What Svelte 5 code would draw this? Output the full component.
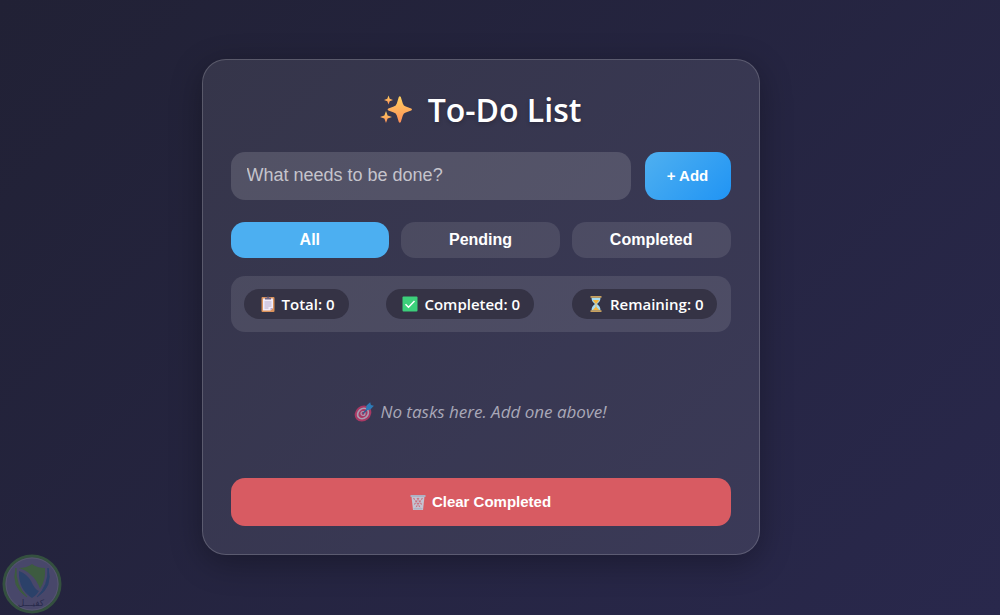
<script>
  let tasks = $state([]);
  let draft = $state('');
  let filter = $state('all');

  const filters = [
    { id: 'all', label: 'All' },
    { id: 'pending', label: 'Pending' },
    { id: 'completed', label: 'Completed' }
  ];

  let completed = $derived(tasks.filter((t) => t.done).length);
  let visible = $derived(
    tasks.filter((t) => {
      if (filter === 'pending') return !t.done;
      if (filter === 'completed') return t.done;
      return true;
    })
  );

  function addTask(event) {
    event.preventDefault();
    const text = draft.trim();
    if (!text) return;
    tasks.push({ id: Date.now(), text, done: false });
    draft = '';
  }

  function clearCompleted() {
    tasks = tasks.filter((t) => !t.done);
  }
</script>

<div class="page">
  <main class="card">
    <h1>
      <svg class="sparkles" viewBox="0 0 32 32" aria-hidden="true">
        <defs>
          <linearGradient id="spark" x1="0" y1="0" x2="0" y2="1">
            <stop offset="0" stop-color="#ffd160" />
            <stop offset="1" stop-color="#ff8f58" />
          </linearGradient>
        </defs>
        <g fill="url(#spark)">
          <path d="M18.800 3q1-1.500 2 0l2 6.500q.7 2.300 3 3l5.400 2q1.500 1 0 2l-5.400 2q-2.300.7-3 3l-2 6.500q-1 1.500-2 0l-2-6.500q-.7-2.300-3-3l-5.400-2q-1.500-1 0-2l5.400-2q2.300-.7 3-3z" />
          <path d="M8.500 1.500l1.200 3.300 3.300 1.200-3.300 1.200-1.200 3.300-1.200-3.300L4 6l3.300-1.200z" />
          <path d="M6 17l1.600 4.400L12 23l-4.400 1.600L6 29l-1.600-4.400L0 23l4.400-1.600z" />
        </g>
      </svg>
      To-Do List
    </h1>

    <form class="add-row" onsubmit={addTask}>
      <input
        type="text"
        placeholder="What needs to be done?"
        aria-label="New task"
        bind:value={draft}
      />
      <button class="add" type="submit">+ Add</button>
    </form>

    <div class="filters">
      {#each filters as f (f.id)}
        <button class:active={filter === f.id} onclick={() => (filter = f.id)}>
          {f.label}
        </button>
      {/each}
    </div>

    <div class="stats">
      <span class="stat">
        <svg viewBox="0 0 16 16" aria-hidden="true">
          <rect x="1.500" y="1" width="13" height="15" rx="1" fill="#dc935c" />
          <path d="M3 2.500h10v9.500l-2.500 2.500H3z" fill="#f2ecfa" />
          <path d="M13 12h-2.500v2.500z" fill="#b5a8cf" />
          <path d="M5 3.500V1.800h1.700Q8-.8 9.300 1.800H11v1.700z" fill="#706583" />
          <path d="M4.500 6h7M4.500 8h7M4.500 10h7M4.500 12h4" stroke="#aaa0c3" stroke-width=".8" />
        </svg>
        Total: {tasks.length}
      </span>
      <span class="stat">
        <svg viewBox="0 0 16 16" aria-hidden="true">
          <rect x=".5" y=".5" width="15" height="15" rx="1" fill="#3ccf7b" />
          <path d="M3.500 8.200l3 3 6-6.200" fill="none" stroke="#fff" stroke-width="1.500" />
        </svg>
        Completed: {completed}
      </span>
      <span class="stat">
        <svg viewBox="0 0 16 16" aria-hidden="true">
          <path d="M3.500 1.500h9c0 3.500-1.500 4.700-3.500 6.500 2 1.800 3.500 3 3.500 6.500h-9c0-3.500 1.500-4.700 3.500-6.500-2-1.800-3.500-3-3.500-6.500z" fill="#a6dcf2" />
          <path d="M5 4h6c-.5 1.500-1.500 2.500-2.600 3.600V11l2.800 3H4.800l2.800-3V7.600C6.500 6.500 5.500 5.500 5 4z" fill="#f4b63f" />
          <path d="M2.500 0h11v1.800h-11zM2.500 14.200h11V16h-11z" fill="#c9a15e" />
        </svg>
        Remaining: {tasks.length - completed}
      </span>
    </div>

    {#if visible.length === 0}
      <p class="empty">
        <svg viewBox="0 0 20 20" aria-hidden="true">
          <ellipse cx="9" cy="11.500" rx="8.800" ry="7.600" fill="#d9396c" transform="rotate(-40 9 11.500)" />
          <ellipse cx="9" cy="11.500" rx="5.800" ry="4.800" fill="none" stroke="#d8c9dd" stroke-width="1.700" transform="rotate(-40 9 11.500)" />
          <circle cx="9" cy="11.500" r="2" fill="none" stroke="#d8c9dd" stroke-width="1.200" />
          <path d="M9 11.500l5-5" stroke="#266eac" stroke-width="1.500" />
          <path d="M11.800 8.200l.7-4.700L16.200.2l.7 2.900 3 .7-3.500 3.700z" fill="#2998e2" />
        </svg>
        No tasks here. Add one above!
      </p>
    {:else}
      <ul>
        {#each visible as task (task.id)}
          <li>
            <label><input type="checkbox" bind:checked={task.done} /> {task.text}</label>
          </li>
        {/each}
      </ul>
    {/if}

    <button class="clear" onclick={clearCompleted}>
      <svg viewBox="0 0 16 16" aria-hidden="true">
        <path d="M1.500 2.500h13L13 16H3z" fill="#c4c4d2" />
        <path d="M3.500 4l7 10M7 4l5 7M12.500 4l-7 10M9 4l-5 7" stroke="#cb707f" stroke-width="1.100" stroke-dasharray="2 1" />
        <path d="M.5 1h15v2H.5z" fill="#aeb3c5" />
        <path d="M3.500 14h9v1.500h-9z" fill="#aeb3c5" />
      </svg>
      Clear Completed
    </button>
  </main>

  <svg class="badge" viewBox="0 0 64 64" role="img" aria-label="كفيل">
    <circle cx="32" cy="33" r="28" fill="#48476a" stroke="#34503f" stroke-width="3" />
    <circle cx="32" cy="33" r="26" fill="none" stroke="#56566f" stroke-width="1" />
    <path d="M19 17q8 0 13-4 5 4 13 4 1 12-5 21-3-9-9-14-5-5-12-7z" fill="#3d5b40" />
    <path d="M19 20q8 3 12 10 4 9 8 10-3 5-7 7-14-9-13-27z" fill="#2b4169" />
    <path d="M16 17q-5 19 11 29-12-12-11-29z" fill="#3d5b40" stroke="#3d5b40" />
    <path d="M48 17q5 19-11 29 12-12 11-29z" fill="#2b4169" stroke="#2b4169" />
    <text x="31" y="55" text-anchor="middle">كفيـــل</text>
  </svg>
</div>

<style>
  :global(body) {
    margin: 0;
  }

  .page {
    box-sizing: border-box;
    min-height: 100vh;
    padding: 24px 39px 26px 0;
    display: flex;
    align-items: center;
    justify-content: center;
    background: linear-gradient(135deg, #212135, #29284c);
    color: #fff;
    font-family: 'Segoe UI', 'Open Sans', 'Noto Sans', sans-serif;
  }

  .card {
    box-sizing: border-box;
    width: 100%;
    max-width: 558px;
    padding: 28px;
    border: 1px solid rgba(255, 255, 255, 0.18);
    border-radius: 24px;
    background: rgba(255, 255, 255, 0.09);
    box-shadow: 0 8px 32px rgba(0, 0, 0, 0.3);
  }

  h1 {
    display: flex;
    align-items: center;
    justify-content: center;
    gap: 16px;
    margin: 0 0 20px;
    font-size: 32px;
    font-weight: 600;
    line-height: 44px;
    text-shadow: 0 2px 4px rgba(0, 0, 0, 0.2);
  }

  .sparkles {
    width: 32px;
    height: 32px;
  }

  button,
  input {
    font-family: 'Liberation Sans', Arial, sans-serif;
    color: #fff;
  }

  button {
    border: 0;
    border-radius: 14px;
    font-size: 15px;
    font-weight: bold;
    cursor: pointer;
  }

  .add-row {
    display: flex;
    gap: 14px;
    margin-bottom: 22px;
  }

  .add-row input {
    box-sizing: border-box;
    flex: 1;
    min-width: 0;
    height: 48px;
    padding: 0 16px;
    border: 0;
    border-radius: 14px;
    background: rgba(255, 255, 255, 0.14);
    font-size: 18px;
    outline: none;
  }

  .add-row input::placeholder {
    color: #c5c4cc;
  }

  .add {
    width: 86px;
    background: linear-gradient(135deg, #4fb0f0, #2094f4);
  }

  .filters {
    display: flex;
    gap: 12px;
    margin-bottom: 18px;
  }

  .filters button {
    flex: 1;
    height: 36px;
    background: rgba(255, 255, 255, 0.1);
    font-size: 16px;
  }

  .filters button.active {
    background: #4caff1;
  }

  .stats {
    display: flex;
    justify-content: space-between;
    padding: 13px;
    border-radius: 14px;
    background: rgba(255, 255, 255, 0.1);
  }

  .stat {
    display: flex;
    align-items: center;
    gap: 6px;
    padding: 0 14px 0 16px;
    border-radius: 15px;
    background: #353345;
    font-size: 15px;
    font-weight: 600;
    line-height: 30px;
  }

  .stat svg,
  .clear svg {
    width: 16px;
    height: 16px;
  }

  .empty {
    display: flex;
    align-items: center;
    justify-content: center;
    gap: 6px;
    margin: 0;
    padding: 68px 0 54px;
    color: #a9a8b8;
    font-size: 17px;
    font-style: italic;
    line-height: 24px;
  }

  .empty svg {
    width: 20px;
    height: 20px;
    opacity: 0.7;
  }

  ul {
    margin: 0;
    padding: 18px 0;
    list-style: none;
  }

  li {
    padding: 8px 12px;
  }

  .clear {
    display: flex;
    align-items: center;
    justify-content: center;
    gap: 6px;
    width: 100%;
    height: 48px;
    background: #d85b62;
  }

  /* Brand mark pinned over the page corner */
  .badge {
    position: absolute;
    left: 0;
    bottom: 0;
    width: 64px;
    height: 64px;
  }

  .badge text {
    fill: #292b4c;
    font-family: 'DejaVu Sans', sans-serif;
    font-size: 9px;
  }
</style>
